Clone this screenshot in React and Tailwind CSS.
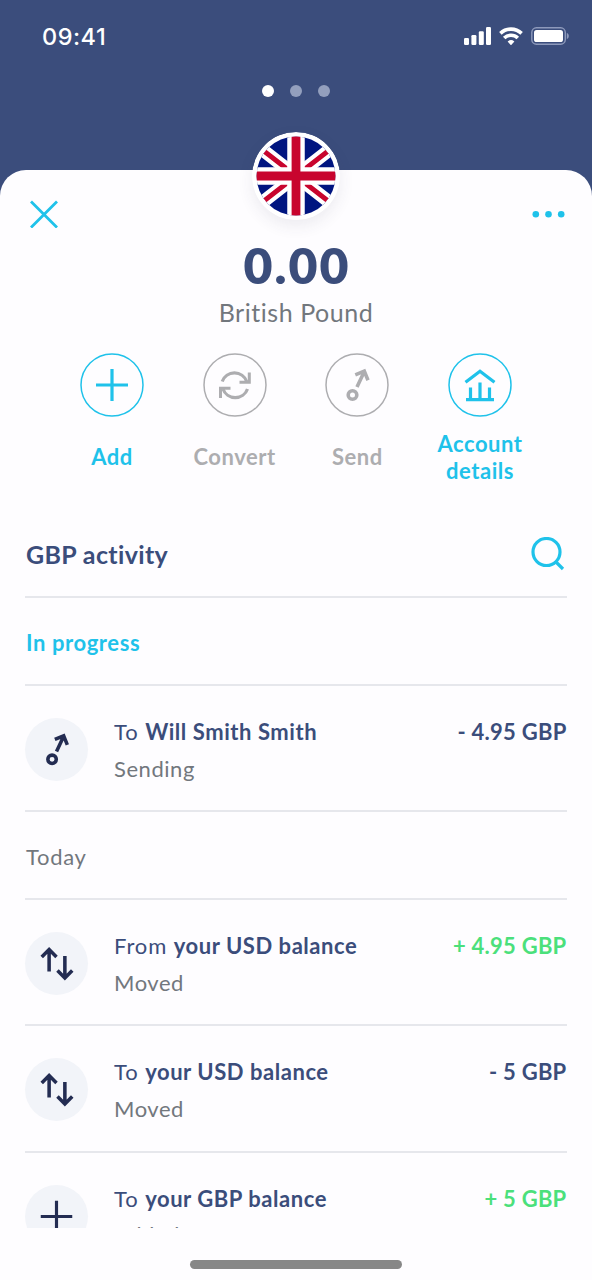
import React from "react";

function StatusBar() {
  return (
    <div className="flex h-[72px] items-center justify-between pr-[23px] pl-[42px] text-white">
      <span className="mt-[2px] font-['Inter'] text-[23.5px] leading-7 font-medium tracking-[0.5px]">09:41</span>
      <div className="flex items-center gap-[8px]">
        <svg className="h-[18px] w-[27px]" viewBox="0 0 27 18" fill="currentColor">
          <rect x="0" y="11" width="5" height="7" rx="1.2" />
          <rect x="7.4" y="8" width="5" height="10" rx="1.2" />
          <rect x="14.8" y="4.3" width="5" height="13.7" rx="1.2" />
          <rect x="22" y="0" width="5" height="18" rx="1.2" />
        </svg>
        <svg className="h-[18px] w-[24px]" viewBox="0 0 24 18" fill="none" stroke="currentColor" strokeWidth="3.6">
          <path d="M1.4 6.4a15.2 15.2 0 0 1 21.200 0" />
          <path d="M5.2 11a9.8 9.8 0 0 1 13.6 0" />
          <path d="M12 18.300l-3.4-3.800a5.300 5.300 0 0 1 6.800 0z" fill="currentColor" stroke="none" />
        </svg>
        <svg className="h-[18px] w-[38px]" viewBox="0 0 38 18">
          <rect x="0.8" y="0.8" width="33.500" height="16.400" rx="4.600" fill="none" stroke="#8d99bb" strokeWidth="1.400" />
          <rect x="3" y="3" width="29" height="12" rx="2.600" fill="#fff" />
          <path d="M35.800 6v6c1.600-.6 2-1.800 2-3s-.4-2.400-2-3z" fill="#8d99bb" />
        </svg>
      </div>
    </div>
  );
}

function Flag() {
  return (
    <svg className="size-[88px] rounded-full shadow-[0_6px_16px_rgba(60,60,90,0.09)]" viewBox="-44 -44 88 88">
      <defs>
        <clipPath id="disc">
          <circle r="39.500" />
        </clipPath>
      </defs>
      <circle r="44" fill="#fff" />
      <g clipPath="url(#disc)">
        <rect x="-40" y="-40" width="80" height="80" fill="#001580" />
        <path d="M-50-39L50 39M-50 39L50-39" stroke="#fff" strokeWidth="13" />
        <path d="M-50-39L50 39M-50 39L50-39" stroke="#c8052e" strokeWidth="5" />
        <path d="M0-44V44M-44 0H44" stroke="#fff" strokeWidth="17.500" />
        <path d="M0-44V44M-44 0H44" stroke="#c8052e" strokeWidth="8.800" />
      </g>
    </svg>
  );
}

const icons = {
  plus: <path d="M32 16v32M16 32h32" strokeWidth="3.200" />,
  convert: (
    <>
      <path d="M19.200 28.500a13 13 0 0 1 24.500 0M44.500 36a13 13 0 0 1-24.500 0" strokeWidth="3.200" />
      <path d="M46.300 19.500v9.700H36.500M17.500 45v-9.700h10" strokeWidth="3" />
    </>
  ),
  send: (
    <>
      <circle cx="27.500" cy="42" r="4.300" />
      <path d="M32 34L39.300 18.500M30.300 21.800L39.300 18.200L43 27.300" />
    </>
  ),
  bank: <path d="M17.500 29.300L32 18.300L46.500 29.300M18 46.700h28M22.500 46V34.500M32 46V29.500M41.500 46V34.500" strokeWidth="3.200" />,
  swap: <path d="M24.500 40V18.500M17 25.300l7.500-7.500l7.500 7.500M40.500 24.500V46M33 39.200l7.500 7.500l7.500-7.500" />,
};

function Glyph({ name, ring }) {
  return (
    <svg className="size-full" viewBox="0 0 64 64" fill="none" stroke="currentColor" strokeWidth="3.600">
      {ring && <circle cx="32" cy="32" r="31" strokeWidth="1.500" />}
      {icons[name]}
    </svg>
  );
}

function Action({ icon, label, muted }) {
  return (
    <div className={`flex w-[122.700px] flex-col items-center ${muted ? "text-[#adadb0]" : "text-[#1fc2ea]"}`}>
      <div className="size-16">
        <Glyph name={icon} ring />
      </div>
      <div className="mt-[12px] flex h-[56px] items-center text-center text-[22px] leading-[27.500px] font-bold tracking-[0.550px]">
        <span className="w-[100px]">{label}</span>
      </div>
    </div>
  );
}

function Row({ icon, prefix, name, status, amount, positive, last }) {
  return (
    <div className={`flex h-[126.200px] shrink-0 pt-[32px] ${last ? "" : "border-b-2 border-[#e6e7ec]"}`}>
      <div className="size-[63px] shrink-0 rounded-full bg-[#f2f4f9] text-[#232c52]">
        <Glyph name={icon} />
      </div>
      <div className="ml-[26px] flex-1">
        <div className="flex justify-between text-[22px] leading-[28px] text-[#3b4d7b]">
          <span className="tracking-[0.900px]">
            {prefix} <b className="font-bold tracking-[0.550px]">{name}</b>
          </span>
          <span className={`mr-[0.500px] font-bold tracking-[0.250px] ${positive ? "text-[#4be07b]" : ""}`}>{amount}</span>
        </div>
        <div className={`text-[22px] leading-[28px] tracking-[0.550px] text-[#72777d] ${last ? "mt-[8.500px]" : "mt-[9px]"}`}>
          {status}
        </div>
      </div>
    </div>
  );
}

export default function App() {
  return (
    <div className="flex h-[1280px] w-[592px] flex-col overflow-hidden bg-[#3b4d7c] font-['Lato',sans-serif]">
      <header className="h-[170px] shrink-0">
        <StatusBar />
        <div className="mt-[13px] flex justify-center gap-[16px]">
          <span className="size-[12px] rounded-full bg-white" />
          <span className="size-[12px] rounded-full bg-[#939fbd]" />
          <span className="size-[12px] rounded-full bg-[#939fbd]" />
        </div>
      </header>

      <main className="flex flex-1 flex-col rounded-t-[26px] bg-[#fefdff] px-[25px]">
        <div className="flex h-[74px] items-start justify-between">
          <svg className="mt-[30px] ml-[5px] size-[28px]" viewBox="0 0 28 28" stroke="#1fc2ea" strokeWidth="2.800">
            <path d="M1 1.500l26 26M27 1.500l-26 26" />
          </svg>
          <div className="-mt-[38px] -mr-[2px]">
            <Flag />
          </div>
          <svg className="mt-[40px] mr-[2px] h-[8px] w-[33px]" viewBox="0 0 33 8" fill="#1fc2ea">
            <circle cx="3.800" cy="4.300" r="3.300" />
            <circle cx="16.500" cy="4.300" r="3.300" />
            <circle cx="29.200" cy="4.300" r="3.300" />
          </svg>
        </div>

        <div className="-mt-[2px] pl-[2px] text-center text-[50px] leading-[46px] font-extrabold tracking-[2px] text-[#3b4d7b]">0.00</div>
        <div className="mt-[8px] text-center text-[25px] leading-[32px] tracking-[0.550px] text-[#72777d]">British Pound</div>

        <div className="mt-[25px] flex justify-center">
          <Action icon="plus" label="Add" />
          <Action icon="convert" label="Convert" muted />
          <Action icon="send" label="Send" muted />
          <Action icon="bank" label="Account details" />
        </div>

        <div className="mt-[2px] flex h-[111px] items-center justify-between border-b-2 border-[#e6e7ec] pt-[25px] pl-px">
          <h2 className="text-[25px] leading-8 font-bold tracking-[0.350px] text-[#3b4d7b]">GBP activity</h2>
          <svg className="mr-[2px] size-[34px]" viewBox="0 0 34 34" fill="none" stroke="#1fc2ea" strokeWidth="3.200">
            <circle cx="15.500" cy="15" r="13.500" />
            <path d="M24.500 24.500l7.500 7.500" />
          </svg>
        </div>
        <div className="flex h-[88px] items-center border-b-2 border-[#e6e7ec] pt-[3px] pl-px text-[22px] font-bold tracking-[0.600px] text-[#1fc2ea]">
          In progress
        </div>
        <Row icon="send" prefix="To" name="Will Smith Smith" status="Sending" amount="- 4.95 GBP" />
        <div className="flex h-[88px] items-center border-b-2 border-[#e6e7ec] pt-[3px] pl-px text-[22px] tracking-[0.700px] text-[#72777d]">
          Today
        </div>
        <Row icon="swap" prefix="From" name="your USD balance" status="Moved" amount="+ 4.95 GBP" positive />
        <Row icon="swap" prefix="To" name="your USD balance" status="Moved" amount="- 5 GBP" />
        <div className="h-[75px] shrink-0 overflow-hidden">
          <Row icon="plus" prefix="To" name="your GBP balance" status="Added" amount="+ 5 GBP" positive last />
        </div>
        <div className="mx-auto mt-[32px] h-[9px] w-[212px] shrink-0 rounded-full bg-[#878787]" />
      </main>
    </div>
  );
}
